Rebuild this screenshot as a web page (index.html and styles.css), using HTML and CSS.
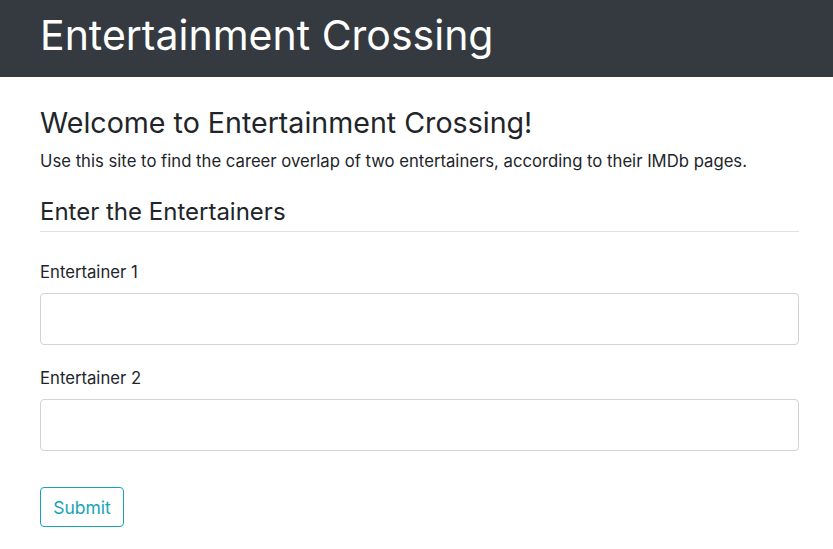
FILE: index.html
```html
<!DOCTYPE html>
<html lang="en">
<head>
<meta charset="utf-8">
<title>Entertainment Crossing</title>
<link rel="stylesheet" href="styles.css">
</head>
<body>
<header class="topbar">
  <h1 class="brand">Entertainment Crossing</h1>
</header>
<main class="content">
  <h2 class="welcome">Welcome to Entertainment Crossing!</h2>
  <p class="intro">Use this site to find the career overlap of two entertainers, according to their IMDb pages.</p>
  <h3 class="section-title">Enter the Entertainers</h3>
  <form class="form">
    <div class="field">
      <label class="label" for="e1">Entertainer 1</label>
      <input class="input" id="e1" type="text">
    </div>
    <div class="field">
      <label class="label" for="e2">Entertainer 2</label>
      <input class="input" id="e2" type="text">
    </div>
    <button class="submit" type="button">Submit</button>
  </form>
</main>
</body>
</html>
```
FILE: styles.css
```css
* { box-sizing: border-box; }
body {
  margin: 0;
  font-family: Inter, "Liberation Sans", Arial, sans-serif;
  color: #212529;
  background: #fff;
}
.topbar {
  background: #343a40;
  height: 77px;
  padding: 10px 40px 0;
}
.brand {
  margin: 0;
  color: #fff;
  font-weight: 400;
  font-size: 41px;
  line-height: 50px;
}
.content {
  padding: 29px 34px 0 40px;
}
.welcome {
  margin: 0 0 9px;
  font-size: 28.6px;
  font-weight: 400;
  line-height: 34px;
}
.intro {
  margin: 0 0 24px;
  font-size: 16.7px;
  line-height: 24px;
}
.section-title {
  margin: 0;
  font-size: 24px;
  font-weight: 400;
  line-height: 29px;
  padding-bottom: 5px;
  border-bottom: 1px solid #dee2e6;
}
.form {
  padding-top: 28px;
}
.field {
  display: flex;
  flex-direction: column;
  margin-bottom: 21px;
}
.label {
  font-size: 16.7px;
  line-height: 24px;
  margin-bottom: 9px;
}
.input {
  height: 52px;
  border: 1px solid #ced4da;
  border-radius: 4px;
  font-size: 16px;
  padding: 6px 12px;
  font-family: inherit;
}
.submit {
  display: block;
  margin-top: 36px;
  width: 84px;
  height: 40px;
  background: #fff;
  color: #17a2b8;
  border: 1px solid #17a2b8;
  border-radius: 4px;
  font-size: 17.5px;
  font-family: inherit;
  padding: 0;
}
```
